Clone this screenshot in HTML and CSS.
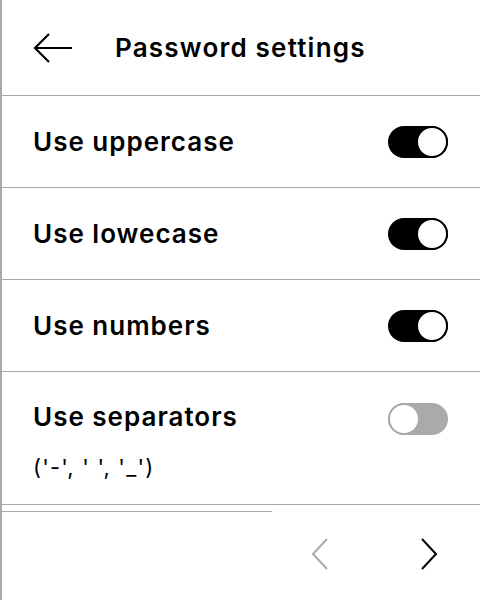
FILE: index.html
```html
<!DOCTYPE html>
<html>
<head>
<meta charset="utf-8">
<link rel="stylesheet" href="styles.css">
</head>
<body>
<div class="screen">
  <header class="header">
    <svg class="back" width="40" height="32" viewBox="0 0 40 32"><path d="M39 16H2M16 2L2 16L16 30" fill="none" stroke="#000" stroke-width="2.2"/></svg>
    <h1 class="title">Password settings</h1>
  </header>
  <div class="row">
    <span class="label">Use uppercase</span>
    <span class="toggle on"><span class="knob"></span></span>
  </div>
  <div class="row">
    <span class="label">Use lowecase</span>
    <span class="toggle on"><span class="knob"></span></span>
  </div>
  <div class="row">
    <span class="label">Use numbers</span>
    <span class="toggle on"><span class="knob"></span></span>
  </div>
  <div class="row tall">
    <div class="texts">
      <span class="label">Use separators</span>
      <span class="sub">('-', ' ', '_')</span>
    </div>
    <span class="toggle off"><span class="knob"></span></span>
  </div>
  <div class="short-line"></div>
  <footer class="footer">
    <svg class="chev" width="20" height="34" viewBox="0 0 20 34"><path d="M17 2L3 17L17 32" fill="none" stroke="#aaa" stroke-width="2"/></svg>
    <svg class="chev" width="20" height="34" viewBox="0 0 20 34"><path d="M3 2L17 17L3 32" fill="none" stroke="#000" stroke-width="2"/></svg>
  </footer>
</div>
</body>
</html>
```
FILE: styles.css
```css
html, body {
  margin: 0;
  padding: 0;
  background: #fff;
}
body {
  font-family: Inter, "Noto Sans", sans-serif;
  color: #000;
}
.screen {
  width: 478px;
  height: 600px;
  border-left: 2px solid #aaa;
  display: flex;
  flex-direction: column;
}
.header {
  border-bottom: 1px solid #aaa;
  display: flex;
  align-items: center;
  padding-left: 31px;
  box-sizing: border-box;
  height: 96px;
}
.back {
  display: block;
  margin-right: 42px;
}
.title {
  margin: 0;
  font-size: 26px;
  font-weight: 600;
  letter-spacing: 1.2px;
}
.row {
  height: 92px;
  box-sizing: border-box;
  border-bottom: 1px solid #aaa;
  display: flex;
  align-items: center;
  justify-content: space-between;
  padding: 0 32px 0 31px;
}
.row.tall {
  height: 133px;
  align-items: flex-start;
  padding-top: 30px;
}
.texts {
  display: flex;
  flex-direction: column;
  gap: 22px;
}
.label {
  font-size: 26px;
  font-weight: 600;
  letter-spacing: 1px;
  line-height: 30px;
}
.sub {
  font-size: 22px;
  font-weight: 400;
  letter-spacing: 1.2px;
  line-height: 26px;
}
.toggle {
  width: 60px;
  height: 32px;
  border-radius: 16px;
  box-sizing: border-box;
  display: flex;
  align-items: center;
}
.toggle.on {
  background: #000;
  justify-content: flex-end;
}
.toggle.off {
  background: #aaa;
  justify-content: flex-start;
  margin-top: 1px;
}
.knob {
  width: 32px;
  height: 32px;
  border-radius: 50%;
  background: #fff;
  box-sizing: border-box;
  border: 2px solid #000;
}
.toggle.off .knob {
  border-color: #aaa;
}
.short-line {
  width: 270px;
  height: 0;
  border-bottom: 1px solid #aaa;
  margin-top: 6px;
}
.footer {
  flex: 1;
  display: flex;
  justify-content: flex-end;
  align-items: center;
  gap: 89px;
  padding-right: 41px;
  padding-bottom: 4px;
}
.chev {
  display: block;
}
```
